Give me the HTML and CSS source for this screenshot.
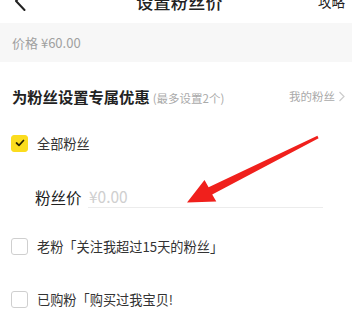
FILE: index.html
```html
<!DOCTYPE html>
<html lang="zh">
<head>
<meta charset="utf-8">
<link rel="stylesheet" href="styles.css">
</head>
<body>
<div class="page">
  <header class="header">
    <div class="back">
      <svg width="12" height="20" viewBox="0 0 12 20"><path d="M10.5 1 L2 10 L10.5 19" fill="none" stroke="#222" stroke-width="2" stroke-linecap="round" stroke-linejoin="round"/></svg>
    </div>
    <div class="title">设置粉丝价</div>
    <div class="guide">攻略</div>
  </header>
  <div class="price-band">价格 ¥60.00</div>
  <div class="section-head">
    <div class="sh-left"><span class="sh-title">为粉丝设置专属优惠</span><span class="sh-note">(最多设置2个)</span></div>
    <div class="sh-right">我的粉丝<svg width="7" height="11" viewBox="0 0 7 11"><path d="M1.5 1 L6 5.5 L1.5 10" fill="none" stroke="#ccc" stroke-width="1.2"/></svg></div>
  </div>
  <div class="opt opt-first">
    <span class="cb cb-on"><svg width="10" height="8" viewBox="0 0 10 8"><path d="M1.5 4 L4 6.3 L8.5 1.5" fill="none" stroke="#2a2200" stroke-width="1.7" stroke-linecap="round" stroke-linejoin="round"/></svg></span>
    <span class="opt-text">全部粉丝</span>
  </div>
  <div class="fan-price">
    <span class="fp-label">粉丝价</span>
    <span class="fp-input">¥0.00</span>
  </div>
  <div class="opt opt-second">
    <span class="cb"></span>
    <span class="opt-text">老粉「关注我超过15天的粉丝」</span>
  </div>
  <div class="opt opt-third">
    <span class="cb"></span>
    <span class="opt-text">已购粉「购买过我宝贝!</span>
  </div>
  <svg class="arrow" width="352" height="317" viewBox="0 0 352 317">
    <polygon points="317.4,135.8 208.6,187.2 204.5,180.0 187,202.5 216.3,201.4 212.2,194.4 318.6,138.2" fill="#f0201c"/>
  </svg>
</div>
</body>
</html>
```
FILE: styles.css
```css
html, body {
  margin: 0;
  padding: 0;
  background: #fff;
}
.page {
  position: relative;
  width: 352px;
  height: 317px;
  overflow: hidden;
  font-family: "Noto Sans CJK SC", "Noto Sans", sans-serif;
  color: #333;
}
.header {
  height: 44px;
  margin-top: -21px;
  display: grid;
  grid-template-columns: 1fr auto 1fr;
  align-items: center;
  padding: 0 7px 0 14px;
}
.back {
  display: flex;
  align-items: center;
}
.title {
  font-size: 17px;
  color: #222;
  font-weight: 500;
  letter-spacing: 0.3px;
}
.guide {
  justify-self: end;
  font-size: 13.5px;
  color: #222;
}
.price-band {
  height: 39px;
  line-height: 39px;
  background: #f7f7f7;
  padding-left: 12px;
  font-size: 13px;
  color: #a0a0a0;
}
.section-head {
  height: 68px;
  display: flex;
  align-items: center;
  justify-content: space-between;
  padding: 0 7px 0 12px;
}
.sh-title {
  font-size: 15.3px;
  font-weight: 700;
  color: #222;
}
.sh-note {
  font-size: 11.5px;
  color: #aaa;
  margin-left: 3px;
}
.sh-right {
  font-size: 11.5px;
  color: #aaa;
  display: flex;
  align-items: center;
  gap: 3px;
}
.opt {
  height: 26px;
  display: flex;
  align-items: center;
  padding-left: 11px;
}
.cb {
  width: 17px;
  height: 17px;
  box-sizing: border-box;
  border: 1px solid #cfcfcf;
  border-radius: 3px;
  background: #fff;
  display: flex;
  align-items: center;
  justify-content: center;
}
.cb-on {
  background: #fbdc1e;
  border-color: #fbdc1e;
}
.opt-text {
  margin-left: 9px;
  font-size: 13.2px;
  color: #333;
}
.fan-price {
  margin-top: 29px;
  display: flex;
  align-items: flex-end;
  padding-left: 35px;
}
.fp-label {
  width: 53px;
  height: 22px;
  line-height: 22px;
  font-size: 15.5px;
  color: #222;
}
.fp-input {
  width: 234px;
  height: 22px;
  line-height: 22px;
  border-bottom: 1px solid #ececec;
  font-size: 15.5px;
  color: #cfcfcf;
  padding-left: 1px;
}
.opt-second {
  margin-top: 25px;
}
.opt-third {
  margin-top: 27px;
}
.arrow {
  position: absolute;
  left: 0;
  top: 0;
}
```
